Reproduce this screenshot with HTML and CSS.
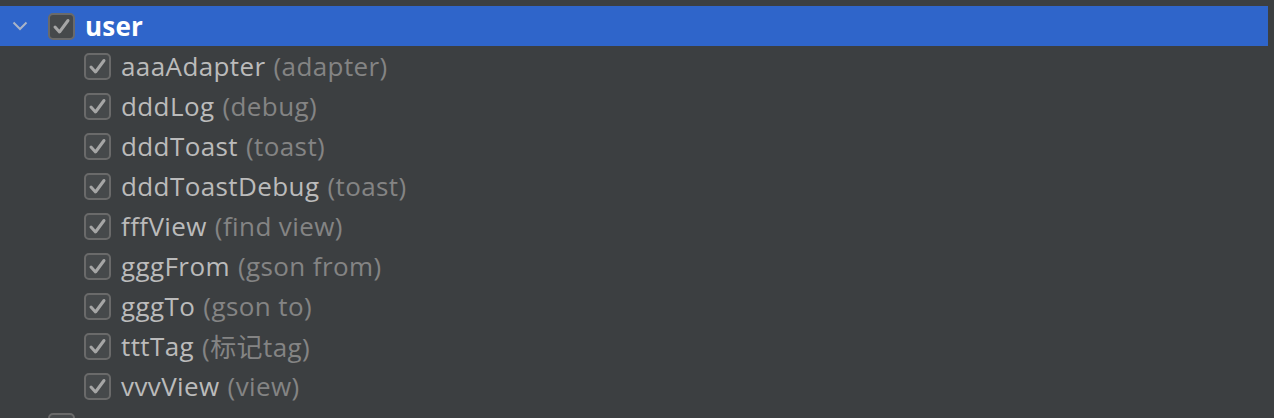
FILE: index.html
```html
<!DOCTYPE html>
<html>
<head>
<meta charset="utf-8">
<link rel="stylesheet" href="styles.css">
</head>
<body>
<div class="tree">
  <div class="row row-group selected">
    <span class="chev"><svg width="16" height="10" viewBox="0 0 16 10"><path d="M1.5 1.5 L8 8 L14.5 1.5" fill="none" stroke="#a9b4c8" stroke-width="2"/></svg></span>
    <span class="cb"><svg width="27" height="27" viewBox="0 0 27 27"><rect x="1" y="1" width="25" height="25" rx="4" fill="#46494b" stroke="#6a6a6a" stroke-width="2"/><path d="M7 14 L11.5 19 L20 7.5" fill="none" stroke="#a6a6a6" stroke-width="3" stroke-linecap="round" stroke-linejoin="round"/></svg></span>
    <span class="name">user</span>
  </div>
  <div class="row row-item"><span class="cb"><svg width="27" height="27" viewBox="0 0 27 27"><rect x="1" y="1" width="25" height="25" rx="4" fill="#46494b" stroke="#6a6a6a" stroke-width="2"/><path d="M7 14 L11.5 19 L20 7.5" fill="none" stroke="#a6a6a6" stroke-width="3" stroke-linecap="round" stroke-linejoin="round"/></svg></span><span class="name">aaaAdapter</span><span class="hint">(adapter)</span></div>
  <div class="row row-item"><span class="cb"><svg width="27" height="27" viewBox="0 0 27 27"><rect x="1" y="1" width="25" height="25" rx="4" fill="#46494b" stroke="#6a6a6a" stroke-width="2"/><path d="M7 14 L11.5 19 L20 7.5" fill="none" stroke="#a6a6a6" stroke-width="3" stroke-linecap="round" stroke-linejoin="round"/></svg></span><span class="name">dddLog</span><span class="hint">(debug)</span></div>
  <div class="row row-item"><span class="cb"><svg width="27" height="27" viewBox="0 0 27 27"><rect x="1" y="1" width="25" height="25" rx="4" fill="#46494b" stroke="#6a6a6a" stroke-width="2"/><path d="M7 14 L11.5 19 L20 7.5" fill="none" stroke="#a6a6a6" stroke-width="3" stroke-linecap="round" stroke-linejoin="round"/></svg></span><span class="name">dddToast</span><span class="hint">(toast)</span></div>
  <div class="row row-item"><span class="cb"><svg width="27" height="27" viewBox="0 0 27 27"><rect x="1" y="1" width="25" height="25" rx="4" fill="#46494b" stroke="#6a6a6a" stroke-width="2"/><path d="M7 14 L11.5 19 L20 7.5" fill="none" stroke="#a6a6a6" stroke-width="3" stroke-linecap="round" stroke-linejoin="round"/></svg></span><span class="name">dddToastDebug</span><span class="hint">(toast)</span></div>
  <div class="row row-item"><span class="cb"><svg width="27" height="27" viewBox="0 0 27 27"><rect x="1" y="1" width="25" height="25" rx="4" fill="#46494b" stroke="#6a6a6a" stroke-width="2"/><path d="M7 14 L11.5 19 L20 7.5" fill="none" stroke="#a6a6a6" stroke-width="3" stroke-linecap="round" stroke-linejoin="round"/></svg></span><span class="name">fffView</span><span class="hint">(find view)</span></div>
  <div class="row row-item"><span class="cb"><svg width="27" height="27" viewBox="0 0 27 27"><rect x="1" y="1" width="25" height="25" rx="4" fill="#46494b" stroke="#6a6a6a" stroke-width="2"/><path d="M7 14 L11.5 19 L20 7.5" fill="none" stroke="#a6a6a6" stroke-width="3" stroke-linecap="round" stroke-linejoin="round"/></svg></span><span class="name">gggFrom</span><span class="hint">(gson from)</span></div>
  <div class="row row-item"><span class="cb"><svg width="27" height="27" viewBox="0 0 27 27"><rect x="1" y="1" width="25" height="25" rx="4" fill="#46494b" stroke="#6a6a6a" stroke-width="2"/><path d="M7 14 L11.5 19 L20 7.5" fill="none" stroke="#a6a6a6" stroke-width="3" stroke-linecap="round" stroke-linejoin="round"/></svg></span><span class="name">gggTo</span><span class="hint">(gson to)</span></div>
  <div class="row row-item"><span class="cb"><svg width="27" height="27" viewBox="0 0 27 27"><rect x="1" y="1" width="25" height="25" rx="4" fill="#46494b" stroke="#6a6a6a" stroke-width="2"/><path d="M7 14 L11.5 19 L20 7.5" fill="none" stroke="#a6a6a6" stroke-width="3" stroke-linecap="round" stroke-linejoin="round"/></svg></span><span class="name">tttTag</span><span class="hint">(标记tag)</span></div>
  <div class="row row-item"><span class="cb"><svg width="27" height="27" viewBox="0 0 27 27"><rect x="1" y="1" width="25" height="25" rx="4" fill="#46494b" stroke="#6a6a6a" stroke-width="2"/><path d="M7 14 L11.5 19 L20 7.5" fill="none" stroke="#a6a6a6" stroke-width="3" stroke-linecap="round" stroke-linejoin="round"/></svg></span><span class="name">vvvView</span><span class="hint">(view)</span></div>
  <div class="row row-group">
    <span class="chev"><svg width="10" height="16" viewBox="0 0 10 16"><path d="M1.5 1.5 L8 8 L1.5 14.5" fill="none" stroke="#9a9a9a" stroke-width="2"/></svg></span>
    <span class="cb"><svg width="27" height="27" viewBox="0 0 27 27"><rect x="1" y="1" width="25" height="25" rx="4" fill="#46494b" stroke="#6a6a6a" stroke-width="2"/><path d="M7 14 L11.5 19 L20 7.5" fill="none" stroke="#a6a6a6" stroke-width="3" stroke-linecap="round" stroke-linejoin="round"/></svg></span>
    <span class="name">FreeHTML</span>
  </div>
</div>
</body>
</html>
```

FILE: styles.css
```css
html, body {
  margin: 0;
  padding: 0;
  background: #3c3f41;
  overflow: hidden;
}
body {
  width: 1274px;
  height: 418px;
  font-family: "Open Sans", "Noto Sans CJK SC", sans-serif;
  font-size: 26px;
  letter-spacing: 0.4px;
}
.tree {
  padding-top: 6px;
  width: 1268px;
}
.row {
  height: 40px;
  display: flex;
  align-items: center;
  white-space: nowrap;
}
.row-group {
  padding-left: 12px;
}
.row-item {
  padding-left: 84px;
}
.chev {
  width: 36px;
  display: flex;
  align-items: center;
  justify-content: flex-start;
}
.cb {
  width: 27px;
  height: 27px;
  display: block;
  margin-right: 10px;
}
.cb svg { display: block; }
.name {
  color: #bbbbbb;
}
.hint {
  color: #848484;
  margin-left: 8px;
}
.selected {
  background: #2f65ca;
}
.selected .name {
  color: #ffffff;
  font-weight: 700;
  letter-spacing: 0.2px;
}
```
